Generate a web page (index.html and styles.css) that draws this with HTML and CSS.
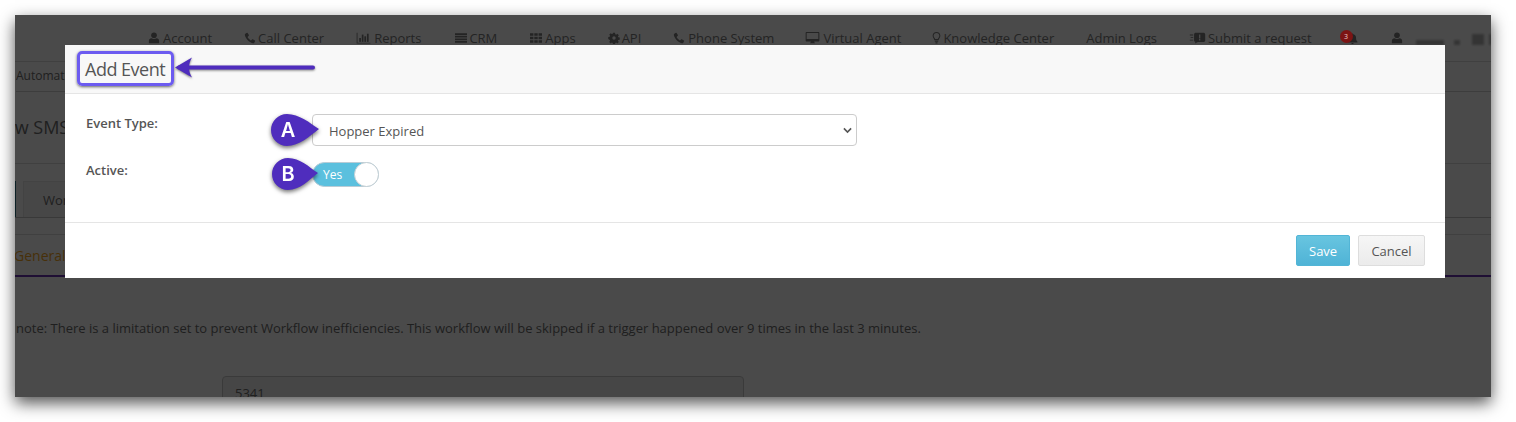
FILE: index.html
```html
<!DOCTYPE html>
<html lang="en">
<head>
<meta charset="utf-8">
<title>Add Event</title>
<link rel="stylesheet" href="styles.css">
</head>
<body>
<svg class="sprite" width="0" height="0" aria-hidden="true">
  <symbol id="i-user" viewBox="0 0 14 14"><circle cx="7" cy="3.8" r="3.3"/><path d="M1 13.2V10.3C1 8.4 2.4 7.2 4 7.2c.9.6 1.9.9 3 .9s2.100-.3 3-.9c1.600 0 3 1.200 3 3.100v2.900z"/></symbol>
  <symbol id="i-phone" viewBox="0 0 14 14"><path d="M3.400 1 1.500 2c-.6.4-.7 1-.5 1.800C2 7.900 6 12 10.200 13c.8.200 1.400 0 1.800-.6l1-1.800c.1-.3 0-.6-.2-.7l-2.500-1.500c-.3-.1-.5-.1-.7.100L8.500 9.700c-.2.200-.4.200-.6.100C6.700 9 5 7.300 4.300 6c-.1-.2 0-.4.100-.6l1.200-1.100c.2-.2.200-.4.100-.7L4.200 1.200C4 .9 3.700.9 3.400 1z"/></symbol>
  <symbol id="i-chart" viewBox="0 0 16 14"><path d="M0 1h1v11.500h15V13.500H0z"/><rect x="3" y="7" width="2" height="4.500"/><rect x="6" y="3" width="2" height="8.500"/><rect x="9" y="5" width="2" height="6.500"/><rect x="12" y="2" width="2" height="9.500"/></symbol>
  <symbol id="i-list" viewBox="0 0 14 14"><path d="M0 1.500h14v2H0zM0 4.500h14v2H0zM0 7.500h14v2H0zM0 10.500h14v2H0z"/></symbol>
  <symbol id="i-grid" viewBox="0 0 14 14"><path d="M0 1.500h4v3H0zM5 1.500h4v3H5zM10 1.500h4v3h-4zM0 5.500h4v3H0zM5 5.500h4v3H5zM10 5.500h4v3h-4zM0 9.500h4v3H0zM5 9.500h4v3H5zM10 9.500h4v3h-4z"/></symbol>
  <symbol id="i-cog" viewBox="0 0 14 14"><path fill-rule="evenodd" d="M5.800 1h2.400l.3 1.700 1 .4 1.400-1 1.700 1.700-1 1.400.4 1 1.700.3v2.400l-1.700.3-.4 1 1 1.400-1.700 1.700-1.400-1-1 .4-.3 1.700H5.800l-.3-1.700-1-.4-1.400 1-1.700-1.700 1-1.400-.4-1L.3 8.200V5.800l1.700-.3.400-1-1-1.400 1.700-1.700 1.400 1 1-.4zM7 5a2 2 0 1 0 0 4 2 2 0 0 0 0-4z"/></symbol>
  <symbol id="i-desktop" viewBox="0 0 16 14"><path fill-rule="evenodd" d="M1.200 0h13.600c.7 0 1.200.5 1.200 1.200v8.600c0 .7-.5 1.200-1.200 1.200H10c0 1 .4 1.500 1 2H5c.6-.5 1-1 1-2H1.200C.5 11 0 10.500 0 9.800V1.200C0 .5.500 0 1.200 0zM1.200 1.200v7h13.600v-7z"/></symbol>
  <symbol id="i-bulb" viewBox="0 0 10 14"><path fill-rule="evenodd" d="M5 0c2.700 0 4.500 2 4.500 4.300 0 2.200-1.700 3.200-2 5.200h-5c-.3-2-2-3-2-5.200C.5 2 2.300 0 5 0zm0 1.200c-2 0-3.300 1.400-3.300 3.100 0 1.500 1.300 2.500 1.800 4h3c.5-1.500 1.800-2.500 1.800-4C8.300 2.600 7 1.200 5 1.200zM3 10.200h4v1.200H3zM3.800 12h2.400v1.300H3.800z"/></symbol>
  <symbol id="i-request" viewBox="0 0 18 14"><path d="M0 3h4v1H0zM1 6h3v1H1zM0 9h4v1H0z"/><path fill-rule="evenodd" d="M7 1h9c1 0 2 .8 2 1.800v7c0 1-1 1.800-2 1.800H9.500L6 13.500l.6-2C5.700 11.300 5 10.700 5 9.800v-7C5 1.800 6 1 7 1zm3.800 2v4.500h1.500V3zm0 5.300v1.500h1.500V8.300z"/></symbol>
  <symbol id="i-bell" viewBox="0 0 14 14"><path d="M7 .5c.6 0 1 .4 1 1 2.300.4 3.500 2.200 3.500 4.400 0 3 .8 4 1.800 5.100v1H.7v-1c1-1.100 1.800-2.100 1.800-5.100C2.500 3.700 3.700 1.900 6 1.500c0-.6.400-1 1-1zM5.500 12.800h3c0 .7-.7 1.200-1.500 1.200s-1.500-.5-1.500-1.200z"/></symbol>
</svg>

<div class="window">
  <div class="page">
    <nav class="topnav">
      <a class="nav-item account-link"><svg class="ico"><use href="#i-user"/></svg>Account</a>
      <a class="nav-item"><svg class="ico"><use href="#i-phone"/></svg>Call Center</a>
      <a class="nav-item"><svg class="ico wide"><use href="#i-chart"/></svg>Reports</a>
      <a class="nav-item crm"><svg class="ico"><use href="#i-list"/></svg>CRM</a>
      <a class="nav-item"><svg class="ico apps"><use href="#i-grid"/></svg>Apps</a>
      <a class="nav-item"><svg class="ico"><use href="#i-cog"/></svg>API</a>
      <a class="nav-item"><svg class="ico roomy"><use href="#i-phone"/></svg>Phone System</a>
      <a class="nav-item tuck"><svg class="ico wide"><use href="#i-desktop"/></svg>Virtual Agent</a>
      <a class="nav-item tuck"><svg class="ico slim"><use href="#i-bulb"/></svg>Knowledge Center</a>
      <a class="nav-item">Admin Logs</a>
      <a class="nav-item"><svg class="ico wider"><use href="#i-request"/></svg>Submit a request</a>
      <a class="nav-item bell"><svg class="ico"><use href="#i-bell"/></svg><span class="count">3</span></a>
      <a class="nav-item account"><svg class="ico"><use href="#i-user"/></svg>
        <span class="blur-name"><i class="b1"></i><i class="b2"></i><i class="b3"></i><i class="b4"></i></span>
      </a>
    </nav>
    <div class="crumbs">Automation</div>
    <h1 class="title">New SMS Workflow</h1>
    <div class="tabs">
      <span class="tab first"></span>
      <span class="tab">Workflow</span>
    </div>
    <div class="subtabs">
      <span class="subtab">General</span>
    </div>
    <p class="note">note: There is a limitation set to prevent Workflow inefficiencies. This workflow will be skipped if a trigger happened over 9 times in the last 3 minutes.</p>
    <div class="field">5341</div>
  </div>

  <div class="backdrop"></div>

  <section class="modal">
    <header class="modal-head"><h2>Add Event</h2></header>
    <div class="modal-body">
      <div class="form-row type-row">
        <label class="form-label">Event Type:</label>
        <div class="select">Hopper Expired
          <svg class="chevron" viewBox="0 0 10 7"><path d="M1 1.200 5 5.200l4-4"/></svg>
        </div>
      </div>
      <div class="form-row active-row">
        <label class="form-label">Active:</label>
        <div class="toggle"><span>Yes</span><i class="knob"></i></div>
      </div>
    </div>
    <footer class="modal-foot">
      <button class="btn save">Save</button>
      <button class="btn cancel">Cancel</button>
    </footer>
  </section>

  <div class="callout-box"></div>
  <svg class="callout-arrow" viewBox="0 0 150 30">
    <path d="M140 13.500H6"/>
    <path d="M19 3.500 2 13.500l17 10c-2-3-3-7-3-10s1-7 3-10z" class="head"/>
  </svg>
  <svg class="pin pin-a" viewBox="0 0 50 34">
    <path d="M49 16C40 10 29 1 17 1a16 16 0 0 0 0 32c12 0 23-10 32-17z"/>
    <text x="18" y="23.500">A</text>
  </svg>
  <svg class="pin pin-b" viewBox="0 0 50 34">
    <path d="M47 16C38 10 29 1 17 1a16 16 0 0 0 0 32c12 0 21-10 30-17z"/>
    <text x="17" y="24">B</text>
  </svg>
</div>
</body>
</html>
```
FILE: styles.css
```css
* { box-sizing: border-box; }
html, body { margin: 0; height: 422px; overflow: hidden; background: #fff; }
body { padding: 15px; font-family: "Open Sans", "Liberation Sans", sans-serif; font-size: 13px; }
.sprite { position: absolute; }

.window {
  position: relative;
  width: 1476px;
  height: 382px;
  overflow: visible;
  box-shadow: 0 6px 15px rgba(0, 0, 0, .68);
}
.page {
  width: 100%;
  height: 100%;
  overflow: hidden;
  background: #fff;
  color: #6e6e6e;
}
.backdrop { position: absolute; inset: 0; background: rgba(0, 0, 0, .71); }

/* top navigation */
.topnav {
  display: flex;
  align-items: center;
  gap: 32px;
  height: 47px;
  padding-left: 133px;
  border-bottom: 1px solid #dcdcdc;
  color: #7c7c7c;
  white-space: nowrap;
}
.nav-item { display: flex; align-items: center; }
.ico { width: 12px; height: 12px; margin-right: 2px; fill: currentColor; }
.ico.wide { width: 15px; margin-right: 3px; }
.ico.slim { width: 9px; margin-right: 2px; }
.ico.wider { width: 17px; margin-right: 2px; }
.ico.apps { width: 14px; }
.ico.roomy { margin-right: 3px; }
.account-link .ico { margin-right: 3px; }
.crm { margin-left: 2px; }
.tuck { margin-left: -1px; }
.bell { position: relative; width: 20px; margin-left: -4px; }
.bell .ico { margin-left: 7px; width: 13px; height: 13px; }
.count {
  position: absolute;
  z-index: 1;
  left: 0;
  top: -2px;
  width: 13px;
  height: 13px;
  border-radius: 50%;
  background: #7c1414;
  color: #e8c8c8;
  font-size: 7px;
  line-height: 13px;
  text-align: center;
}
.account { margin-left: -1px; }
.blur-name { display: flex; align-items: flex-end; margin-left: 11px; height: 14px; filter: blur(.8px); }
.blur-name i { display: block; background: #b4b4b4; }
.b1 { width: 28px; height: 5px; }
.b2 { width: 6px; height: 5px; margin-left: 10px; }
.b3 { width: 12px; height: 11px; margin-left: 12px; }
.b4 { width: 3px; height: 11px; margin-left: 5px; }

.crumbs { height: 30px; margin-left: 1px; line-height: 27px; font-size: 12px; border-bottom: 1px solid #d2d2d2; }
.title {
  margin: 0 0 0 -24px;
  height: 71px;
  padding-top: 21px;
  font-size: 18px;
  line-height: 28px;
  font-weight: 400;
  white-space: nowrap;
  color: #6e6e6e;
}
.tabs {
  display: flex;
  align-items: flex-end;
  gap: 7px;
  height: 55px;
  padding-top: 18px;
  border-top: 1px solid #dcdcdc;
  border-bottom: 1px solid #c4c4c4;
}
.tab {
  display: flex;
  align-items: center;
  height: 36px;
  padding: 0 19px;
  background: #f4f4f4;
  border: 1px solid #e6e6e6;
  border-bottom: 0;
  color: #6e6e6e;
}
.tab.first { width: 1px; padding: 0; background: #2a6f7f; border: 0; }
.subtabs {
  height: 43px;
  margin: 16px 0 0 -1px;
  padding-top: 10px;
  border-top: 1px solid #dcdcdc;
  border-bottom: 2px solid #6a35b2;
  color: #f5a623;
  font-size: 14px;
}
.subtab { line-height: 22px; }
.note { margin: 41px 0 0 1px; line-height: 20px; color: #6c6c6c; font-size: 13px; white-space: nowrap; }
.field {
  width: 522px;
  height: 40px;
  margin: 38px 0 0 207px;
  padding: 6px 12px;
  background: #f0f0f0;
  border: 1px solid #c8c8c8;
  border-radius: 4px;
  line-height: 20px;
  font-size: 13px;
}

/* dialog */
.modal {
  position: absolute;
  left: 50px;
  top: 30px;
  width: 1380px;
  height: 233px;
  background: #fff;
  display: flex;
  flex-direction: column;
  color: #555;
}
.modal-head { height: 49px; flex: none; padding: 0 20px; background: #f8f8f8; border-bottom: 1px solid #e5e5e5; }
.modal-head h2 { margin: 0; font-size: 18px; letter-spacing: -.5px; font-weight: 400; line-height: 48px; color: #555; }
.modal-body { flex: 1; padding: 20px 21px 0; border-bottom: 1px solid #e5e5e5; }
.form-row { display: flex; }
.type-row { height: 32px; }
.active-row { margin-top: 16px; height: 25px; }
.form-label { width: 226px; font-size: 13px; font-weight: 600; line-height: 18px; color: #555; }
.active-row .form-label { line-height: 17px; }
.select {
  position: relative;
  width: 545px;
  height: 32px;
  padding-left: 16px;
  line-height: 32px;
  font-size: 13px;
  border: 1px solid #ccc;
  border-radius: 4px;
  background: #fff;
  color: #555;
}
.chevron { position: absolute; right: 4px; top: 12px; width: 9px; height: 7px; fill: none; stroke: #555; stroke-width: 1.800; }
.toggle {
  display: flex;
  align-items: center;
  justify-content: space-between;
  width: 67px;
  height: 25px;
  padding-left: 10px;
  border: 1px solid #b9ccd6;
  border-radius: 13px;
  background: #5bc0de;
  color: #fff;
  font-size: 12px;
}
.knob { width: 25px; height: 25px; margin-right: -1px; border-radius: 50%; background: #fff; border: 1px solid #c4cfd4; }
.modal-foot { height: 55px; flex: none; display: flex; justify-content: flex-end; align-items: flex-start; gap: 8px; padding: 12px 20px 0; }
.btn { height: 31px; padding: 0 12px; font: 13px "Open Sans", "Liberation Sans", sans-serif; border-radius: 2px; }
.save { width: 54px; color: #fff; background: linear-gradient(#68c5e0, #4fb3d6); border: 1px solid #52b5d6; }
.cancel { width: 67px; color: #555; background: linear-gradient(#f6f6f6, #ebebeb); border: 1px solid #ddd; }

/* annotations */
.callout-box {
  position: absolute;
  left: 62px;
  top: 36px;
  width: 97px;
  height: 35px;
  border: 3px solid #6c5bf0;
  border-radius: 5px;
  box-shadow: 0 1px 3px rgba(0, 0, 0, .6);
}
.callout-arrow {
  position: absolute;
  left: 158px;
  top: 39px;
  width: 150px;
  height: 30px;
  overflow: visible;
  filter: drop-shadow(0 1px 1px rgba(0, 0, 0, .5));
}
.callout-arrow path { fill: none; stroke: #4f2dbd; stroke-width: 4; stroke-linecap: round; }
.callout-arrow .head { fill: #4f2dbd; stroke: none; }
.pin {
  position: absolute;
  width: 50px;
  height: 34px;
  overflow: visible;
  filter: drop-shadow(0 2px 2px rgba(0, 0, 0, .55));
}
.pin path { fill: #4f2dbd; }
.pin text { fill: #fff; font: 600 20px Inter, "Liberation Sans", sans-serif; text-anchor: middle; }
.pin-a { left: 255px; top: 98px; }
.pin-b { left: 256px; top: 142px; }
```
